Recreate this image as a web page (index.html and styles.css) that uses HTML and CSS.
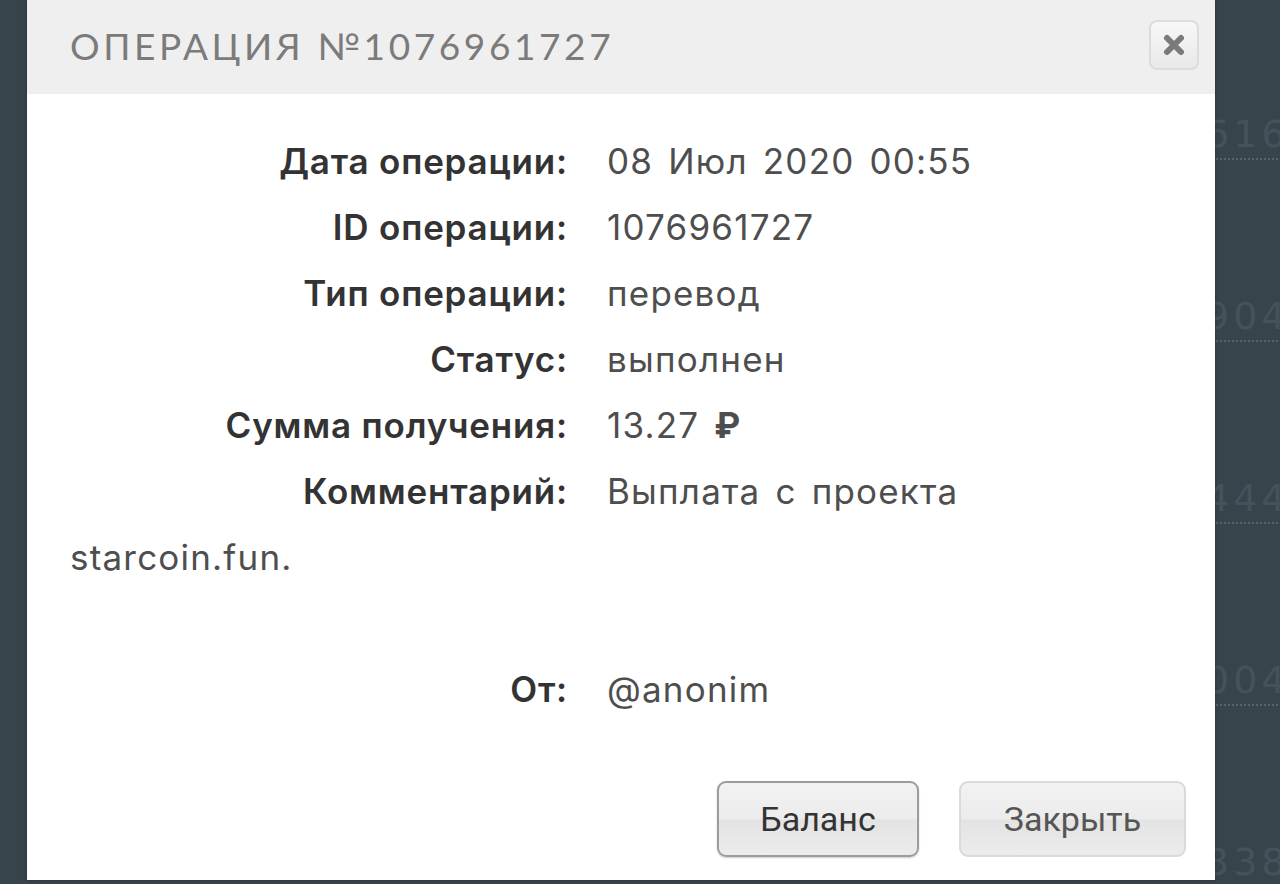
FILE: index.html
```html
<!DOCTYPE html>
<html lang="ru">
<head>
<meta charset="utf-8">
<title>Операция №1076961727</title>
<link rel="stylesheet" href="styles.css">
</head>
<body>
<div class="bg-list">
  <div class="bg-row"><span>6161</span></div>
  <div class="bg-row"><span>9044</span></div>
  <div class="bg-row"><span>4444</span></div>
  <div class="bg-row"><span>0044</span></div>
  <div class="bg-row last"><span>3384</span></div>
</div>

<div class="modal">
  <div class="modal-header">
    <h1 class="modal-title">ОПЕРАЦИЯ №1076961727</h1>
    <button class="close-btn" aria-label="Закрыть">
      <svg width="26" height="26" viewBox="0 0 26 26"><path d="M6 6 L20 20 M20 6 L6 20" stroke="#7a7a7a" stroke-width="6" stroke-linecap="round"/></svg>
    </button>
  </div>
  <div class="modal-body">
    <div class="row"><span class="label">Дата операции:</span><span class="value">08 Июл 2020 00:55</span></div>
    <div class="row"><span class="label">ID операции:</span><span class="value">1076961727</span></div>
    <div class="row"><span class="label">Тип операции:</span><span class="value">перевод</span></div>
    <div class="row"><span class="label">Статус:</span><span class="value">выполнен</span></div>
    <div class="row"><span class="label">Сумма получения:</span><span class="value">13.27 <b class="rub">₽</b></span></div>
    <div class="row"><span class="label">Комментарий:</span><span class="value">Выплата с проекта starcoin.fun.</span></div>
    <div class="row empty">&nbsp;</div>
    <div class="row"><span class="label">От:</span><span class="value">@anonim</span></div>
  </div>
  <div class="modal-footer">
    <button class="btn btn-primary">Баланс</button>
    <button class="btn">Закрыть</button>
  </div>
</div>
</body>
</html>
```
FILE: styles.css
```css
html, body {
  margin: 0;
  padding: 0;
}
body {
  width: 1280px;
  height: 884px;
  overflow: hidden;
  background: #37444c;
  position: relative;
  font-family: "Inter", "Open Sans", sans-serif;
}
.bg-list {
  height: 884px;
  overflow: hidden;
  box-sizing: border-box;
  padding-left: 1205px;
  padding-top: 112px;
  display: flex;
  flex-direction: column;
}
.bg-row {
  flex: 0 0 182px;
  font-family: "DejaVu Sans", sans-serif;
  font-size: 38px;
  letter-spacing: 4px;
  color: #45525a;
  white-space: nowrap;
  overflow: hidden;
}
.bg-row span {
  display: inline-block;
  line-height: 44px;
  border-bottom: 2px dotted #56636b;
  padding-bottom: 2px;
}
.modal {
  position: absolute;
  left: 27px;
  top: 0;
  width: 1188px;
  height: 880px;
  background: #fff;
  box-shadow: 0 0 3px rgba(0,0,0,0.35);
  display: flex;
  flex-direction: column;
}
.modal-header {
  height: 94px;
  background: #efefef;
  display: flex;
  align-items: center;
  justify-content: space-between;
  padding: 0 16px 0 43px;
}
.modal-title {
  margin: 0;
  font-family: "Lato", "Open Sans", sans-serif;
  font-weight: 400;
  font-size: 37px;
  letter-spacing: 3.6px;
  color: #7b7b7b;
  position: relative;
  top: -2px;
}
.close-btn {
  width: 50px;
  height: 50px;
  border: 2px solid #dcdcdc;
  border-radius: 8px;
  background: linear-gradient(#f7f7f7, #e9e9e9);
  display: flex;
  align-items: center;
  justify-content: center;
  padding: 0;
  margin-top: -4px;
}
.modal-body {
  padding: 34px 43px 0 43px;
  font-size: 35px;
  line-height: 66px;
}
.row {
  color: #4e4e4e;
}
.label {
  display: inline-block;
  width: 498px;
  text-align: right;
  margin-right: 39px;
  font-weight: 600;
  letter-spacing: 0.8px;
  color: #333;
}
.value {
  color: #4e4e4e;
  letter-spacing: 1.2px;
  word-spacing: 4px;
}
.rub {
  font-weight: 700;
}
.modal-footer {
  margin-top: auto;
  display: flex;
  justify-content: flex-end;
  gap: 40px;
  padding: 0 29px 23px 0;
}
.btn {
  height: 76px;
  padding: 0;
  border-radius: 9px;
  border: 2px solid #dadada;
  background: linear-gradient(#f2f2f2 0%, #ececec 50%, #e3e3e3 51%, #ececec 100%);
  font-family: "Roboto", "Liberation Sans", sans-serif;
  font-size: 34px;
  color: #555;
  width: 227px;
}
.btn-primary {
  width: 202px;
  border-color: #9c9c9c;
  color: #333;
  box-shadow: 0 1px 2px rgba(0,0,0,0.2);
}
```
